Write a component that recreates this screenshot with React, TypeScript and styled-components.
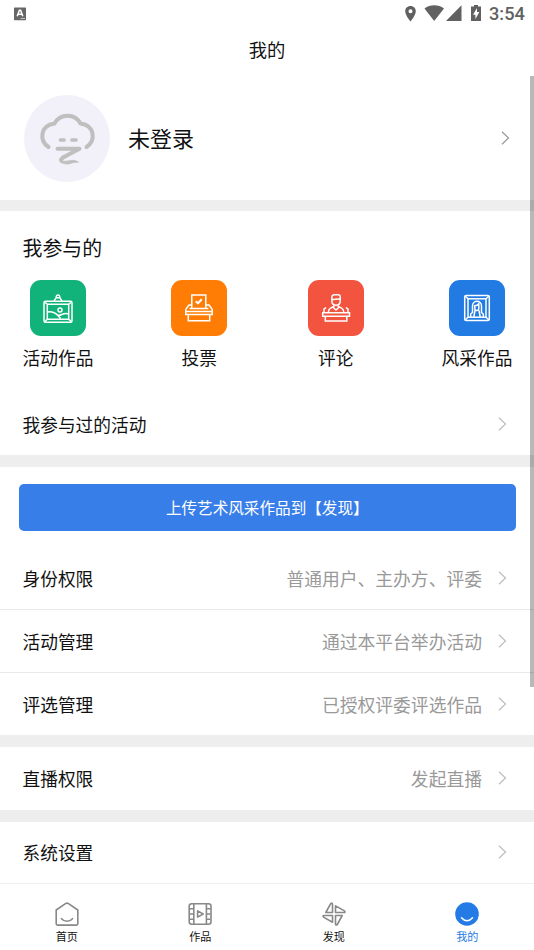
import React from "react";
import styled, { createGlobalStyle } from "styled-components";

const GlobalStyle = createGlobalStyle`
  * { box-sizing: border-box; }
  body { margin: 0; background: #fff; overflow: hidden; }
`;

const Screen = styled.div`
  position: relative;
  display: flex;
  flex-direction: column;
  width: 534px;
  height: 950px;
  overflow: hidden;
  background: #fff;
  color: #111;
  font-family: "Noto Sans CJK SC", sans-serif;
  font-size: 17.7px;
  line-height: 26px;
  white-space: nowrap;
  svg { display: block; flex: none; }
`;

const StatusBar = styled.header`
  height: 28px;
  display: flex;
  align-items: center;
  justify-content: space-between;
  padding: 0 9px 0 14px;
`;

const StatusIcons = styled.div`
  display: flex;
  align-items: center;
`;

const Clock = styled.span`
  width: 36px;
  margin-left: 7px;
  color: #616161;
  font: 500 18.2px/26px Roboto, sans-serif;
`;

const Title = styled.h1`
  margin: 0;
  height: 47px;
  padding-top: 8px;
  text-align: center;
  font-size: 18.3px;
  font-weight: 400;
  line-height: 26px;
`;

const Profile = styled.section`
  height: 125px;
  display: flex;
  align-items: center;
  padding: 2px 24px 0;
`;

const Avatar = styled.div`
  width: 86px;
  height: 87px;
  border-radius: 50%;
  background: #f2f1f9;
`;

const UserName = styled.div`
  flex: 1;
  margin-left: 18px;
  padding-bottom: 2px;
  font-size: 22px;
`;

const Divider = styled.div<{ $h?: number }>`
  flex: none;
  height: ${(p) => p.$h ?? 12}px;
  background: #eee;
`;

const Joined = styled.section`
  height: 244px;
  padding: 24px 21.5px 0 22.5px;
`;

const Heading = styled.h2`
  margin: 0;
  font-size: 19.9px;
  font-weight: 400;
  line-height: 26px;
`;

const Shortcuts = styled.div`
  display: grid;
  grid-template-columns: 71px 62px 62px 71px;
  justify-content: space-between;
  margin-top: 19px;
`;

const Shortcut = styled.div`
  display: flex;
  flex-direction: column;
  align-items: center;
  gap: 8px;
`;

const Tile = styled.div<{ $color: string }>`
  display: grid;
  place-items: center;
  width: 56px;
  height: 56px;
  border-radius: 11px;
  background: ${(p) => p.$color};
`;

const HistoryRow = styled.div`
  display: flex;
  align-items: center;
  justify-content: space-between;
  height: 62px;
  margin-top: 22.5px;
  padding-right: 5.5px;
`;

const UploadButton = styled.button`
  flex: none;
  height: 47px;
  margin: 17px 18px 17px 18.5px;
  padding: 0 0 2px;
  border: 0;
  border-radius: 5px;
  background: #387ee8;
  color: #fff;
  font: inherit;
  font-size: 15.6px;
`;

const Row = styled.div<{ $h: number; $line?: boolean }>`
  flex: none;
  display: flex;
  align-items: center;
  height: ${(p) => p.$h}px;
  padding: 0 27px 0 22.5px;
  border-bottom: ${(p) => (p.$line ? "1px solid #e9e9e9" : "0")};
`;

const Hint = styled.span`
  margin-left: auto;
  margin-right: 16px;
  color: #999;
  font-size: 17.8px;
`;

const Spacer = styled.span`
  flex: 1;
`;

const TabBar = styled.nav`
  flex: none;
  display: grid;
  grid-template-columns: repeat(4, 1fr);
  height: 67px;
  border-top: 1px solid #eee;
`;

const Tab = styled.div<{ $active?: boolean }>`
  display: flex;
  flex-direction: column;
  align-items: center;
  padding-top: 16.5px;
  color: ${(p) => (p.$active ? "#247be5" : "#111")};
  font-size: 11.1px;
  line-height: 16px;
  svg { margin-bottom: 1.5px; }
`;

const ScrollThumb = styled.div`
  position: absolute;
  top: 76px;
  right: 0;
  width: 4px;
  height: 611px;
  background: rgba(0, 0, 0, 0.28);
`;

const Chevron = ({ dark }: { dark?: boolean }) => (
  <svg width="9" height="16" viewBox="0 0 9 16" fill="none" stroke={dark ? "#999" : "#bdbdbd"} strokeWidth="1.2">
    <path d="M1 1.8 7.5 8 1 14.2" />
  </svg>
);

const AvatarFace = () => (
  <svg width="86" height="87" viewBox="0 0 86 87" fill="none" stroke="#bfbfbf" strokeWidth="4" strokeLinecap="round" strokeLinejoin="round">
    <path d="M24.500 52C15 45.500 16 30.500 30.500 28.500C36 18 51 18 56.500 28.500C71 30.500 72 45.500 62.500 52" />
    <path d="M36.500 45h3.500M48 45h4" strokeWidth="3.7" />
    <path d="M33.500 53.700h22L39 62.500" />
    <path d="M39 60.500C31 65.500 37 69.500 45 69C50 67 52 67.500 54.500 67C51 65 48 65 44 66C37 67 37 65 43 62Z" fill="#bfbfbf" strokeWidth=".7" />
  </svg>
);

const FramedPicture = () => (
  <svg width="32" height="32" viewBox="0 0 32 32" fill="none" stroke="#fff" strokeWidth="1.5">
    <rect x="2" y="9.300" width="28" height="21" rx="1.5" />
    <rect x="5.300" y="12.300" width="21.400" height="15" rx=".5" />
    <path d="m2.300 9.700 3 2.600M29.700 9.700l-3 2.600M2.300 30l3-2.700M29.700 30l-3-2.700M12 9l2.200-3.300h3.600L20 9M14.200 5.700c-.5-3.700 4.100-3.700 3.600 0M5.500 20c6-1.500 10 2 13 6.500M15 23c4 1.500 6-3 11.500-1" />
    <circle cx="18" cy="18" r="2" />
  </svg>
);

const BallotBox = () => (
  <svg width="32" height="32" viewBox="0 0 32 32" fill="none" stroke="#fff" strokeWidth="1.5">
    <path d="M8.800 16.500V3h14v13.500M8.800 13H6l-3 4M22.800 13H26l3 4M6.500 16.500h19" />
    <path d="M2.800 17v5.500h26.400V17M3 19.500h26M5.300 22.800v6h21.400v-6" />
    <path d="m12.700 9.300 2.300 2 3.700-4" strokeWidth="2" />
  </svg>
);

const Speaker = () => (
  <svg width="32" height="32" viewBox="0 0 32 32" fill="none" stroke="#fff" strokeWidth="1.5">
    <path d="M11.900 7.500V5c0-1.500 1-2.200 2.500-2.200h3.800c1.500 0 2 1 2 2.200v4c0 5.500-8.300 5.500-8.300 0V7.500c3 0 5-.8 8.300-.5M13.800 12.500v2l-3.300 1.700c-1.500.8-2 2-2.200 4M18.300 12.500v2l3.300 1.700c1.500.8 2 2 2.200 4M13 15.200l3 2.800 3-2.800" />
    <path d="M2.700 20.800h26.800v3.500H2.700ZM5.300 24.500v4.400h21.500v-4.400M4 20.500v-3.300l2-1.700M28 20.500v-3.300l-2-1.700" />
  </svg>
);

const FramedPortrait = () => (
  <svg width="32" height="32" viewBox="0 0 32 32" fill="none" stroke="#fff" strokeWidth="1.5">
    <rect x="3.700" y="3.500" width="24.600" height="25" rx="1.5" />
    <rect x="7" y="6.800" width="18" height="18.400" />
    <path d="m4 4 3 2.800M28 4l-3 2.800M4 28l3-2.800M28 28l-3-2.800" />
    <path d="M9.700 25v-3l1.800-1.500V14c0-6.300 9-6.300 9 0v6.500l1.800 1.500v3M13.800 13.700c2.200 0 3.300-1 4-2v4.500c0 3-4 3-4 0ZM14 18.500 12.800 25M18 18.500l1.200 6.500" />
  </svg>
);

const HomeIcon = () => (
  <svg width="26" height="26" viewBox="0 0 26 26" fill="none" stroke="#888" strokeWidth="1.6" strokeLinecap="round" strokeLinejoin="round">
    <path d="M2.2 9 11.5 2.600q1.500-1 3 0L23.800 9v13.800q0 1.300-1.300 1.300h-19q-1.300 0-1.300-1.300ZM7.500 17.700c3 3.400 8 3.400 11 0" />
  </svg>
);

const FilmIcon = () => (
  <svg width="26" height="26" viewBox="0 0 26 26" fill="none" stroke="#888" strokeWidth="1.6" strokeLinejoin="round">
    <rect x="2.200" y="2.800" width="21.800" height="20.500" rx="2.5" />
    <path d="M6.800 3v20M19.400 3v20M2.500 7.800h4M2.500 13h4M2.500 18.200h4M19.500 7.800h4M19.500 13h4M19.500 18.200h4M10.600 9.900v6.200l5.600-3.100Z" />
  </svg>
);

const PinwheelIcon = () => (
  <svg width="26" height="26" viewBox="0 0 26 26" fill="none" stroke="#888" strokeWidth="1.6" strokeLinejoin="round">
    <path d="M11.500 11.500H4.800L9.700 2.600q1.800-1.200 1.800.7ZM14.500 11.500V4.900l9 5q1.200 1.600-.6 1.600ZM11.500 14.500v6.700l-9-5.100q-1.200-1.600.6-1.600ZM14.500 14.500h6.700L16.300 23.500q-1.800 1.200-1.800-.6Z" />
  </svg>
);

const MineIcon = () => (
  <svg width="26" height="26" viewBox="0 0 26 26" fill="none">
    <circle cx="13" cy="13" r="11.800" fill="#247be5" />
    <path d="M7.500 16.800c3 3.800 8 3.800 11 0" stroke="#fff" strokeWidth="1.5" strokeLinecap="round" />
  </svg>
);

const KeyboardIcon = () => (
  <svg width="12" height="14" viewBox="0 0 12 14">
    <rect y=".4" width="12" height="12.800" rx=".7" fill="#666" />
    <path d="M3.200 9.300 5.400 3.300h1.200l2.200 6M4.200 7.300h3.600" fill="none" stroke="#fff" strokeWidth="1.5" />
    <path d="M6.500 11.500h4.500" stroke="#ddd" strokeWidth=".8" />
  </svg>
);

const SystemIcons = () => (
  <svg width="78" height="18" viewBox="404 5 78 18" fill="#616161">
    <path fillRule="evenodd" d="M410.500 6c-3.300 0-5.300 2.300-5.300 5.200 0 4 5.300 10.300 5.300 10.300s5.300-6.300 5.300-10.300c0-2.900-2-5.200-5.300-5.200Zm0 3.300a2 2 0 1 1 0 4 2 2 0 0 1 0-4Z" />
    <path d="M424.500 8.500c5.500-4.300 14-4.300 19.500 0L434.200 21ZM461.500 5.300V21H446Z" />
    <path fillRule="evenodd" d="M474 5h4v1.500h3V21h-10V6.500h3Zm3 3-4 6.700h2.400V19l4-7h-2.400Z" />
  </svg>
);

const shortcuts = [
  { label: "活动作品", color: "#12b37b", Icon: FramedPicture },
  { label: "投票", color: "#ff7c05", Icon: BallotBox },
  { label: "评论", color: "#f25440", Icon: Speaker },
  { label: "风采作品", color: "#217be3", Icon: FramedPortrait },
];

const tabs = [
  { label: "首页", Icon: HomeIcon },
  { label: "作品", Icon: FilmIcon },
  { label: "发现", Icon: PinwheelIcon },
  { label: "我的", Icon: MineIcon, active: true },
];

export default function App() {
  return (
    <>
      <GlobalStyle />
      <Screen>
        <StatusBar>
          <KeyboardIcon />
          <StatusIcons>
            <SystemIcons />
            <Clock>3:54</Clock>
          </StatusIcons>
        </StatusBar>
        <Title>我的</Title>
        <Profile>
          <Avatar><AvatarFace /></Avatar>
          <UserName>未登录</UserName>
          <Chevron dark />
        </Profile>
        <Divider $h={11.5} />
        <Joined>
          <Heading>我参与的</Heading>
          <Shortcuts>
            {shortcuts.map(({ label, color, Icon }) => (
              <Shortcut key={label}>
                <Tile $color={color}><Icon /></Tile>
                {label}
              </Shortcut>
            ))}
          </Shortcuts>
          <HistoryRow>我参与过的活动<Chevron /></HistoryRow>
        </Joined>
        <Divider />
        <UploadButton>上传艺术风采作品到【发现】</UploadButton>
        <Row $h={61.5} $line>身份权限<Hint>普通用户、主办方、评委</Hint><Chevron /></Row>
        <Row $h={63} $line>活动管理<Hint>通过本平台举办活动</Hint><Chevron /></Row>
        <Row $h={62.5}>评选管理<Hint>已授权评委评选作品</Hint><Chevron /></Row>
        <Divider />
        <Row $h={62.5}>直播权限<Hint>发起直播</Hint><Chevron /></Row>
        <Divider />
        <Row $h={61.5}>系统设置<Spacer /><Chevron /></Row>
        <TabBar>
          {tabs.map(({ label, Icon, active }) => (
            <Tab key={label} $active={active}><Icon />{label}</Tab>
          ))}
        </TabBar>
        <ScrollThumb />
      </Screen>
    </>
  );
}
